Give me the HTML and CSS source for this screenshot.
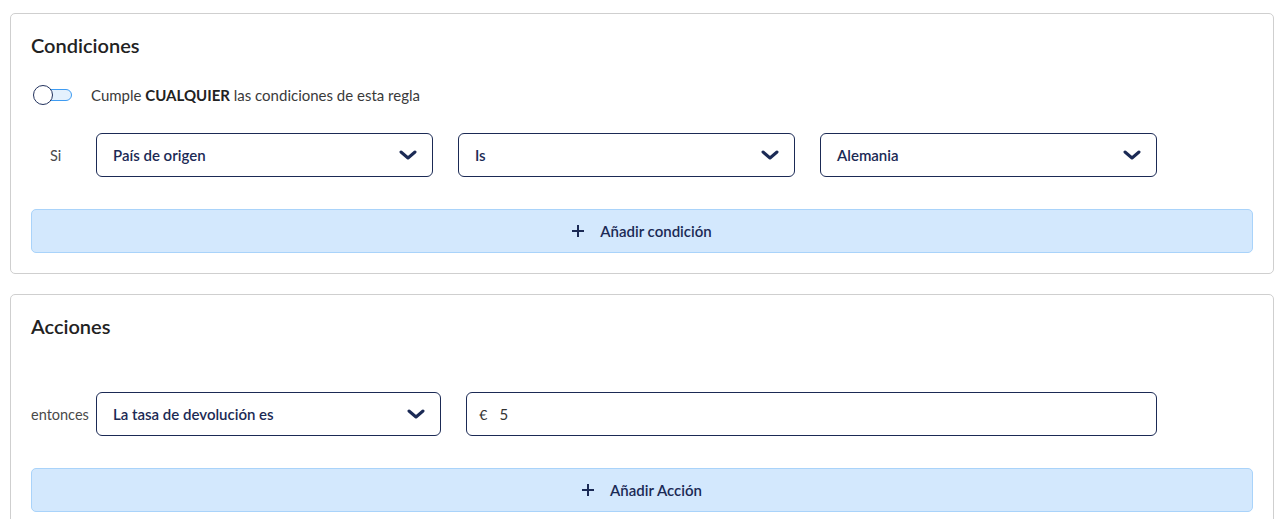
FILE: index.html
```html
<!DOCTYPE html>
<html lang="es">
<head>
<meta charset="utf-8">
<title>Reglas</title>
<link rel="stylesheet" href="styles.css">
</head>
<body>
<div class="page">
  <section class="card">
    <h2 class="card-title">Condiciones</h2>
    <div class="match-row">
      <span class="toggle"><span class="toggle-track"></span><span class="toggle-knob"></span></span>
      <span class="match-text">Cumple <b>CUALQUIER</b> las condiciones de esta regla</span>
    </div>
    <div class="rule-row cols-3">
      <span class="rule-label label-si">Si</span>
      <div class="select"><span>País de origen</span><svg class="chev" width="18" height="10" viewBox="0 0 18 10"><path d="M2 2l7 6 7-6" fill="none" stroke="#1b2a55" stroke-width="3" stroke-linecap="round" stroke-linejoin="round"/></svg></div>
      <div class="select"><span>Is</span><svg class="chev" width="18" height="10" viewBox="0 0 18 10"><path d="M2 2l7 6 7-6" fill="none" stroke="#1b2a55" stroke-width="3" stroke-linecap="round" stroke-linejoin="round"/></svg></div>
      <div class="select"><span>Alemania</span><svg class="chev" width="18" height="10" viewBox="0 0 18 10"><path d="M2 2l7 6 7-6" fill="none" stroke="#1b2a55" stroke-width="3" stroke-linecap="round" stroke-linejoin="round"/></svg></div>
    </div>
    <button class="add-btn"><svg class="plus" width="12" height="12" viewBox="0 0 12 12"><path d="M6 0v12M0 6h12" stroke="#1b2a55" stroke-width="2"/></svg><span>Añadir condición</span></button>
  </section>

  <section class="card">
    <h2 class="card-title">Acciones</h2>
    <div class="spacer"></div>
    <div class="rule-row cols-2">
      <span class="rule-label">entonces</span>
      <div class="select"><span>La tasa de devolución es</span><svg class="chev" width="18" height="10" viewBox="0 0 18 10"><path d="M2 2l7 6 7-6" fill="none" stroke="#1b2a55" stroke-width="3" stroke-linecap="round" stroke-linejoin="round"/></svg></div>
      <div class="input"><span class="currency">€</span><span class="value">5</span></div>
    </div>
    <button class="add-btn"><svg class="plus" width="12" height="12" viewBox="0 0 12 12"><path d="M6 0v12M0 6h12" stroke="#1b2a55" stroke-width="2"/></svg><span>Añadir Acción</span></button>
  </section>
</div>
</body>
</html>
```

FILE: styles.css
```css
* { box-sizing: border-box; }
html, body { margin: 0; padding: 0; background: #fff; }
body {
  font-family: Lato, "Open Sans", "Liberation Sans", sans-serif;
  color: #333;
}
.page {
  padding: 13px 12px 0 10px;
  display: flex;
  flex-direction: column;
  gap: 20px;
}
.card {
  border: 1px solid #cfcfcf;
  border-radius: 5px;
  padding: 18px 20px 20px 20px;
}
.card-title {
  margin: 0;
  font-size: 20px;
  font-weight: 600;
  color: #222;
  line-height: 26px;
}
.match-row {
  display: flex;
  align-items: center;
  margin-top: 26px;
  height: 22px;
}
.toggle {
  position: relative;
  width: 39px;
  height: 20px;
  margin-left: 2px;
  flex: none;
}
.toggle-track {
  position: absolute;
  left: 8px; right: 0; top: 4px;
  height: 12px;
  border: 1px solid #3f9cf2;
  border-radius: 6px;
  background: #e4f1fd;
}
.toggle-knob {
  position: absolute;
  left: 0; top: 0;
  width: 20px; height: 20px;
  border: 1.5px solid #22325d;
  border-radius: 50%;
  background: #fff;
}
.match-text {
  margin-left: 19px;
  font-size: 15px;
  color: #3a3a3a;
}
.match-text b { font-weight: 700; color: #222; }
.rule-row {
  display: grid;
  column-gap: 25px;
  width: 1126px;
  align-items: center;
  margin-top: 27px;
}
.cols-3 { grid-template-columns: 40px 1fr 1fr 1fr; }
.cols-2 { grid-template-columns: 40px 1fr 2fr; }
.rule-label {
  font-size: 14.5px;
  color: #4a4a4a;
  white-space: nowrap;
}
.label-si { padding-left: 19px; }
.spacer { height: 26px; }
.select, .input {
  height: 44px;
  border: 1px solid #1b2a55;
  border-radius: 6px;
  display: flex;
  align-items: center;
  padding: 0 15px 0 16px;
  font-size: 15px;
  font-weight: 600;
  color: #1b2a55;
  background: #fff;
}
.select span { flex: 1; }
.chev { flex: none; }
.input { padding-left: 12px; font-weight: 400; color: #333; }
.currency { margin-right: 12px; font-size: 14px; }
.add-btn {
  display: flex;
  width: 100%;
  height: 44px;
  margin-top: 32px;
  align-items: center;
  justify-content: center;
  gap: 16px;
  background: #d3e8fd;
  border: 1px solid #a9d3fa;
  border-radius: 5px;
  font-family: inherit;
  font-size: 15px;
  font-weight: 600;
  color: #1b2a55;
  cursor: pointer;
}
.plus { flex: none; }
```
